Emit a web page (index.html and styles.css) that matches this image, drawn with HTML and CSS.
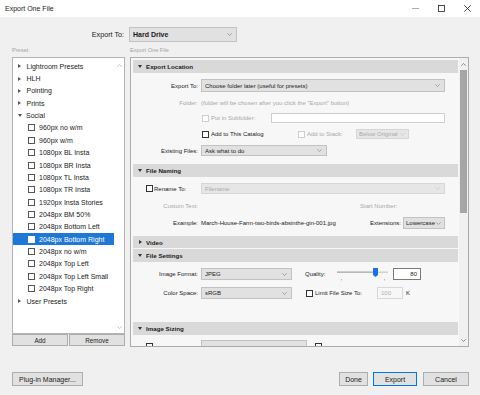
FILE: index.html
```html
<!DOCTYPE html>
<html>
<head>
<meta charset="utf-8">
<title>Export One File</title>
<link rel="stylesheet" href="styles.css">
</head>
<body>
<div class="window">
  <div class="titlebar">
    <span class="title">Export One File</span>
    <div class="controls">
      <span class="ctl"><svg width="7" height="7" viewBox="0 0 7 7"><path d="M0 3.5H7" stroke="#999" stroke-width="0.8"/></svg></span>
      <span class="ctl"><svg width="7" height="7" viewBox="0 0 7 7"><rect x="0.5" y="0.5" width="6" height="6" fill="none" stroke="#222" stroke-width="0.8"/></svg></span>
      <span class="ctl"><svg width="7" height="7" viewBox="0 0 7 7"><path d="M0.3 0.3L6.7 6.7M6.7 0.3L0.3 6.7" stroke="#222" stroke-width="0.8"/></svg></span>
    </div>
  </div>

  <div class="toprow">
    <span class="toplabel">Export To:</span>
    <div class="select big"><span class="sel-text">Hard Drive</span><svg class="chev" width="5" height="3" viewBox="0 0 5 3"><path d="M0.3 0.3L2.5 2.5L4.7 0.3" fill="none" stroke="#888" stroke-width="0.7"/></svg></div>
  </div>

  <div class="captions">
    <span class="cap-left">Preset:</span>
    <span class="cap-right">Export One File</span>
  </div>

  <div class="main">
    <div class="leftcol">
      <div class="tree">
        <div class="tree-list">
          <div class="node"><span class="tri-r"></span>Lightroom Presets</div>
          <div class="node"><span class="tri-r"></span>HLH</div>
          <div class="node"><span class="tri-r"></span>Pointing</div>
          <div class="node"><span class="tri-r"></span>Prints</div>
          <div class="node"><span class="tri-d"></span>Social</div>
          <div class="leaf"><span class="cb"></span>960px no w/m</div>
          <div class="leaf"><span class="cb"></span>960px w/m</div>
          <div class="leaf"><span class="cb"></span>1080px BL Insta</div>
          <div class="leaf"><span class="cb"></span>1080px BR Insta</div>
          <div class="leaf"><span class="cb"></span>1080px TL Insta</div>
          <div class="leaf"><span class="cb"></span>1080px TR Insta</div>
          <div class="leaf"><span class="cb"></span>1920px Insta Stories</div>
          <div class="leaf"><span class="cb"></span>2048px BM 50%</div>
          <div class="leaf"><span class="cb"></span>2048px Bottom Left</div>
          <div class="leaf selected"><span class="cb"></span>2048px Bottom Right</div>
          <div class="leaf"><span class="cb"></span>2048px no w/m</div>
          <div class="leaf"><span class="cb"></span>2048px Top Left</div>
          <div class="leaf"><span class="cb"></span>2048px Top Left Small</div>
          <div class="leaf"><span class="cb"></span>2048px Top Right</div>
          <div class="node"><span class="tri-r"></span>User Presets</div>
        </div>
        <div class="tree-scroll">
          <svg width="5" height="3" viewBox="0 0 5 3"><path d="M0.3 2.7L2.5 0.5L4.7 2.7" fill="none" stroke="#aaa" stroke-width="0.7"/></svg>
          <svg width="5" height="3" viewBox="0 0 5 3"><path d="M0.3 0.3L2.5 2.5L4.7 0.3" fill="none" stroke="#aaa" stroke-width="0.7"/></svg>
        </div>
      </div>
      <div class="tree-buttons">
        <button class="btn small">Add</button>
        <button class="btn small">Remove</button>
      </div>
    </div>

    <div class="panel">
      <div class="panel-content">
        <div class="section">
          <div class="sec-head"><span class="tri-d dark"></span>Export Location</div>
          <div class="sec-body loc">
            <div class="row r13">
              <span class="lbl">Export To:</span>
              <div class="select grow"><span class="sel-text">Choose folder later (useful for presets)</span><svg class="chev" width="5" height="3" viewBox="0 0 5 3"><path d="M0.3 0.3L2.5 2.5L4.7 0.3" fill="none" stroke="#888" stroke-width="0.7"/></svg></div>
            </div>
            <div class="row r10 m6">
              <span class="lbl dim">Folder:</span>
              <span class="dim">(folder will be chosen after you click the "Export" button)</span>
            </div>
            <div class="row r10 m5">
              <span class="lbl"></span>
              <span class="cb dis"></span><span class="dim sub-lbl">Put in Subfolder:</span>
              <span class="input grow"></span>
            </div>
            <div class="row r10 m6">
              <span class="lbl"></span>
              <span class="grp-cat"><span class="cb"></span><span>Add to This Catalog</span></span>
              <span class="grp-stack"><span class="cb dis"></span><span class="dim">Add to Stack:</span></span>
              <div class="select dis w-stack"><span class="sel-text">Below Original</span><svg class="chev" width="5" height="3" viewBox="0 0 5 3"><path d="M0.3 0.3L2.5 2.5L4.7 0.3" fill="none" stroke="#c8c8c8" stroke-width="0.7"/></svg></div>
            </div>
            <div class="row r11 m6">
              <span class="lbl">Existing Files:</span>
              <div class="select w-exist"><span class="sel-text">Ask what to do</span><svg class="chev" width="5" height="3" viewBox="0 0 5 3"><path d="M0.3 0.3L2.5 2.5L4.7 0.3" fill="none" stroke="#888" stroke-width="0.7"/></svg></div>
            </div>
          </div>
        </div>

        <div class="section">
          <div class="sec-head"><span class="tri-d dark"></span>File Naming</div>
          <div class="sec-body naming">
            <div class="row r11">
              <span class="lbl left"><span class="cb"></span>Rename To:</span>
              <div class="select dis grow"><span class="sel-text">Filename</span><svg class="chev" width="5" height="3" viewBox="0 0 5 3"><path d="M0.3 0.3L2.5 2.5L4.7 0.3" fill="none" stroke="#c8c8c8" stroke-width="0.7"/></svg></div>
            </div>
            <div class="row r10 m7">
              <span class="lbl dim">Custom Text:</span>
              <span class="dim start-num">Start Number:</span>
            </div>
            <div class="row r12 m6">
              <span class="lbl">Example:</span>
              <span class="grow">March-House-Farm-two-birds-absinthe-gin-001.jpg</span>
              <span class="ext-lbl">Extensions:</span>
              <div class="select w-ext"><span class="sel-text">Lowercase</span><svg class="chev" width="5" height="3" viewBox="0 0 5 3"><path d="M0.3 0.3L2.5 2.5L4.7 0.3" fill="none" stroke="#888" stroke-width="0.7"/></svg></div>
            </div>
          </div>
        </div>

        <div class="section collapsed">
          <div class="sec-head short"><span class="tri-r dark"></span>Video</div>
        </div>

        <div class="section">
          <div class="sec-head"><span class="tri-d dark"></span>File Settings</div>
          <div class="sec-body settings">
            <div class="row r12">
              <span class="lbl">Image Format:</span>
              <div class="select w-fmt"><span class="sel-text">JPEG</span><svg class="chev" width="5" height="3" viewBox="0 0 5 3"><path d="M0.3 0.3L2.5 2.5L4.7 0.3" fill="none" stroke="#888" stroke-width="0.7"/></svg></div>
              <span class="q-lbl">Quality:</span>
              <svg class="slider" width="51" height="14" viewBox="0 0 51 14">
                <rect x="0" y="4.5" width="51" height="1.5" fill="#d0d0d0"/>
                <rect x="0" y="4.5" width="38" height="1.5" fill="#b8b8b8"/>
                <path d="M36 1H41V8L38.5 10L36 8Z" fill="#1a73d8"/>
                <rect x="4" y="12" width="0.8" height="1.5" fill="#b0b0b0"/>
                <rect x="47" y="12" width="0.8" height="1.5" fill="#b0b0b0"/>
              </svg>
              <span class="input q-in">80</span>
            </div>
            <div class="row r12 m7">
              <span class="lbl">Color Space:</span>
              <div class="select w-fmt"><span class="sel-text">sRGB</span><svg class="chev" width="5" height="3" viewBox="0 0 5 3"><path d="M0.3 0.3L2.5 2.5L4.7 0.3" fill="none" stroke="#888" stroke-width="0.7"/></svg></div>
              <span class="grp-limit"><span class="cb"></span><span>Limit File Size To:</span></span>
              <span class="input dis l-in">100</span>
              <span class="k">K</span>
            </div>
          </div>
        </div>

        <div class="section">
          <div class="sec-head"><span class="tri-d dark"></span>Image Sizing</div>
          <div class="sec-body sizing">
            <div class="row r12">
              <span class="lbl left"><span class="cb"></span></span>
              <div class="select w-resize"></div>
              <span class="grp-enl"><span class="cb"></span></span>
            </div>
          </div>
        </div>
      </div>
      <div class="vscroll">
        <div class="vs-arrow"><svg width="5" height="3" viewBox="0 0 5 3"><path d="M0.3 2.7L2.5 0.5L4.7 2.7" fill="none" stroke="#666" stroke-width="0.7"/></svg></div>
        <div class="vs-thumb"></div>
        <div class="vs-track"></div>
        <div class="vs-arrow"><svg width="5" height="3" viewBox="0 0 5 3"><path d="M0.3 0.3L2.5 2.5L4.7 0.3" fill="none" stroke="#666" stroke-width="0.7"/></svg></div>
      </div>
    </div>
  </div>

  <div class="footer">
    <button class="btn w-plugin">Plug-in Manager...</button>
    <span class="spacer"></span>
    <button class="btn w-done">Done</button>
    <button class="btn primary w-export">Export</button>
    <button class="btn w-cancel">Cancel</button>
  </div>
</div>
</body>
</html>
```

FILE: styles.css
```css
* { box-sizing: border-box; margin: 0; padding: 0; }
body { margin: 0; background: #f0f0f0; font-family: "Liberation Sans", Arial, sans-serif; color: #1a1a1a; }

.window { width: 480px; height: 395px; background: #f0f0f0; display: flex; flex-direction: column; overflow: hidden; }

.titlebar { height: 17px; background: #fff; display: flex; align-items: center; padding-left: 5px; flex: none; }
.title { font-size: 7px; flex: 1; color: #222; }
.controls { display: flex; height: 17px; }
.ctl { width: 26px; display: flex; align-items: center; justify-content: center; }
.ctl svg { display: block; }

.toprow { display: flex; align-items: center; margin-top: 10px; height: 15px; flex: none; }
.toplabel { width: 124px; text-align: right; font-size: 7.2px; color: #222; }

.select { display: flex; align-items: center; background: #e1e1e1; border: 1px solid #c2c2c2; height: 100%; padding-left: 3px; padding-right: 4px; overflow: hidden; white-space: nowrap; }
.select .sel-text { flex: 1; overflow: hidden; }
.select .chev { flex: none; display: block; }
.select.big { margin-left: 5px; width: 108px; font-weight: bold; font-size: 7px; padding-left: 3px; }
.select.dis { background: #e6e6e6; border-color: #d6d6d6; color: #aaa; }

.captions { height: 15px; display: flex; align-items: center; font-size: 5.6px; color: #a3a3a3; flex: none; }
.cap-left { width: 130px; padding-left: 12px; }

.main { display: flex; height: 290px; padding-left: 12px; flex: none; }

.leftcol { width: 113px; display: flex; flex-direction: column; }
.tree { height: 277px; border: 1px solid #b4b4b4; background: #fff; display: flex; flex: none; }
.tree-list { flex: 1; padding-top: 2px; font-size: 7px; color: #222; }
.node, .leaf { height: 12.37px; display: flex; align-items: center; white-space: nowrap; }
.node { padding-left: 5px; }
.leaf { padding-left: 15px; }
.leaf.selected { background: #1e78d4; color: #fff; }
.tri-r { width: 0; height: 0; border-top: 2.5px solid transparent; border-bottom: 2.5px solid transparent; border-left: 3.5px solid #555; margin-right: 5.5px; }
.tri-d { width: 0; height: 0; border-left: 2.5px solid transparent; border-right: 2.5px solid transparent; border-top: 3.5px solid #555; margin-right: 4px; }
.cb { width: 7px; height: 7px; border: 1px solid #333; background: #fff; flex: none; margin-right: 4px; }
.leaf .cb { border-color: #555; }
.leaf.selected .cb { border-color: #fff; background: #fff; }
.tree-scroll { width: 10px; display: flex; flex-direction: column; justify-content: space-between; align-items: center; padding: 6px 0 4px; }
.tree-scroll svg { display: block; }

.tree-buttons { display: flex; height: 12px; }
.btn { font-family: "Liberation Sans", Arial, sans-serif; background: #e1e1e1; border: 1px solid #adadad; color: #222; font-size: 7px; height: 100%; display: flex; align-items: center; justify-content: center; }
.btn.small { font-size: 6.3px; }
.tree-buttons .btn:first-child { width: 56px; margin-right: 1px; }
.tree-buttons .btn:last-child { flex: 1; }

.panel { margin-left: 5px; width: 339px; height: 290px; border: 1px solid #ababab; background: #f7f7f7; display: flex; }
.panel-content { width: 328px; padding: 2px 1px 0 2px; overflow: hidden; font-size: 6px; color: #222; }
.section { margin-bottom: 2px; }
.section.collapsed { margin-bottom: 1px; }
.sec-head { height: 13px; background: #d9d9d9; display: flex; align-items: center; font-weight: bold; font-size: 6.2px; padding-left: 5px; color: #1a1a1a; }
.sec-head.short { height: 12px; }
.sec-head .tri-d.dark { border-top-color: #333; margin-right: 4px; }
.sec-head .tri-r.dark { border-left-color: #333; margin-right: 4px; margin-left: 1px; }

.sec-body { padding-right: 13px; }
.sec-body.loc { height: 89px; padding-top: 6px; }
.sec-body.naming { height: 57px; padding-top: 6px; }
.sec-body.settings { height: 58px; padding-top: 6px; }
.sec-body.sizing { height: 20px; padding-top: 5px; }

.row { display: flex; align-items: center; white-space: nowrap; }
.r10 { height: 10px; }
.r11 { height: 11px; }
.r12 { height: 12px; }
.r13 { height: 13px; }
.m5 { margin-top: 5px; }
.m6 { margin-top: 6px; }
.m7 { margin-top: 7px; }

.lbl { width: 65px; text-align: right; margin-right: 3px; flex: none; }
.lbl.left { text-align: left; padding-left: 13px; display: flex; align-items: center; }
.lbl.left .cb { margin-right: 1px; }
.dim { color: #a8a8a8; }
.grow { flex: 1; }
.cb.dis { border-color: #cfcfcf; }
.row > .cb { margin-left: 1px; margin-right: 2px; }
.sub-lbl { width: 60px; }

.input { background: #fff; border: 1px solid #cfcfcf; height: 100%; display: flex; align-items: center; justify-content: flex-end; padding-right: 3px; }
.input.dis { background: #f7f7f7; border-color: #d8d8d8; color: #b0b0b0; justify-content: flex-start; padding-left: 3px; }

.grp-cat { width: 97px; display: flex; align-items: center; padding-left: 1px; }
.grp-cat .cb { margin-right: 2px; }
.grp-stack { width: 58px; display: flex; align-items: center; }
.grp-stack .cb { margin-right: 2px; }
.w-stack { width: 53px; flex: none; padding-left: 2px; padding-right: 3px; }
.w-exist { width: 126px; flex: none; }

.start-num { margin-left: 159px; }
.ext-lbl { margin-right: 2px; }
.w-ext { width: 42px; flex: none; padding-left: 2px; padding-right: 3px; }

.w-fmt { width: 91px; flex: none; }
.q-lbl { margin-left: 13px; width: 32px; }
.slider { display: block; flex: none; }
.q-in { width: 28px; margin-left: 5px; border-color: #7a7a7a; flex: none; }
.grp-limit { margin-left: 14px; width: 71px; display: flex; align-items: center; }
.grp-limit .cb { margin-right: 2px; }
.l-in { width: 26px; flex: none; }
.k { margin-left: 3px; }
.w-resize { width: 106px; flex: none; }
.grp-enl { margin-left: 8px; display: flex; align-items: center; }
.grp-enl .cb { margin-right: 2px; }

.vscroll { width: 9px; display: flex; flex-direction: column; background: #f0f0f0; }
.vs-arrow { height: 12px; display: flex; align-items: center; justify-content: center; flex: none; }
.vs-thumb { height: 143px; background: #a6a6a6; margin: 0 1px; flex: none; }
.vs-track { flex: 1; }

.footer { display: flex; height: 14px; margin-top: 25px; padding: 0 11px 0 12px; flex: none; }
.spacer { flex: 1; }
.w-plugin { width: 71px; }
.w-done { width: 29px; }
.w-export { width: 44px; margin-left: 5px; }
.w-cancel { width: 46px; margin-left: 6px; }
.btn.primary { border-color: #0078d7; }
```
